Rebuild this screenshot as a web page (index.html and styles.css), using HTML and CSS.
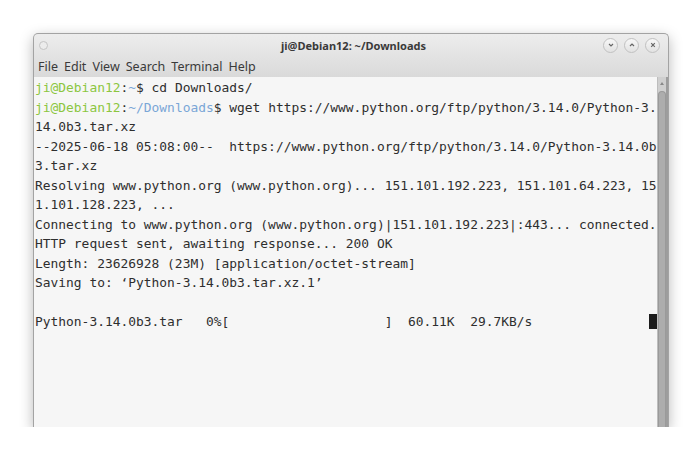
FILE: index.html
```html
<!DOCTYPE html>
<html lang="en">
  <head>
    <meta charset="UTF-8" />
    <title>ji@Debian12: ~/Downloads</title>
    <link rel="stylesheet" href="styles.css">
  </head>
  <body>
    <div class="window">
      <div class="titlebar">
        <span class="dot"></span>
        <span class="title">ji@Debian12: ~/Downloads</span>
        <div class="controls">
          <span class="btn">
            <svg width="8" height="8" viewBox="0 0 8 8"><path d="M2 3 L4 5 L6 3" fill="none" stroke="#666" stroke-width="1.2"/></svg>
          </span>
          <span class="btn">
            <svg width="8" height="8" viewBox="0 0 8 8"><path d="M2 5 L4 3 L6 5" fill="none" stroke="#666" stroke-width="1.2"/></svg>
          </span>
          <span class="btn">
            <svg width="8" height="8" viewBox="0 0 8 8"><path d="M2.2 2.2 L5.8 5.8 M5.8 2.2 L2.2 5.8" fill="none" stroke="#666" stroke-width="1.2"/></svg>
          </span>
        </div>
      </div>
      <div class="menubar">
        <span>File</span><span>Edit</span><span>View</span><span>Search</span><span>Terminal</span><span>Help</span>
      </div>
      <div class="content">
        <pre class="terminal"><span class="user">ji@Debian12</span>:<span class="path">~</span>$ cd Downloads/
<span class="user">ji@Debian12</span>:<span class="path">~/Downloads</span>$ wget https://www.python.org/ftp/python/3.14.0/Python-3.
14.0b3.tar.xz
--2025-06-18 05:08:00--  https://www.python.org/ftp/python/3.14.0/Python-3.14.0b
3.tar.xz
Resolving www.python.org (www.python.org)... 151.101.192.223, 151.101.64.223, 15
1.101.128.223, ...
Connecting to www.python.org (www.python.org)|151.101.192.223|:443... connected.
HTTP request sent, awaiting response... 200 OK
Length: 23626928 (23M) [application/octet-stream]
Saving to: ‘Python-3.14.0b3.tar.xz.1’

Python-3.14.0b3.tar   0%[                    ]  60.11K  29.7KB/s               <span class="cursor"> </span></pre>
        <div class="scrollbar">
          <span class="arrow"></span>
          <span class="slider"></span>
        </div>
      </div>
    </div>
  </body>
</html>
```

FILE: styles.css
```css
* {
  margin: 0;
  padding: 0;
  box-sizing: border-box;
}

body {
  background: #fff;
  font-family: "Noto Sans", "DejaVu Sans", sans-serif;
}

.window {
  width: 636px;
  height: 394px;
  margin: 33px 0 0 33px;
  border: 1px solid #a3a3a3;
  border-bottom: none;
  border-radius: 5px 5px 0 0;
  background: linear-gradient(#ededed, #d9d9d9 44px);
  box-shadow: 0 4px 14px rgba(0, 0, 0, 0.28);
  display: flex;
  flex-direction: column;
  overflow: hidden;
}

.titlebar {
  height: 22px;
  display: flex;
  align-items: center;
  padding: 0 8px 0 5px;
}

.dot {
  width: 9px;
  height: 9px;
  border-radius: 50%;
  border: 1px solid #c4c4c4;
  background: #ececec;
}

.title {
  flex: 1;
  text-align: center;
  font-size: 11px;
  font-weight: bold;
  color: #3a3a3a;
  padding-left: 56px;
}

.controls {
  display: flex;
  gap: 6px;
}

.btn {
  width: 15px;
  height: 15px;
  border-radius: 50%;
  border: 1px solid #c0c0c0;
  background: linear-gradient(#f7f7f7, #e2e2e2);
  display: flex;
  align-items: center;
  justify-content: center;
}

.menubar {
  height: 21px;
  display: flex;
  align-items: center;
  gap: 6px;
  padding-left: 4px;
  font-size: 12.5px;
  color: #3a3a3a;
}

.content {
  flex: 1;
  display: flex;
  min-height: 0;
}

.terminal {
  flex: 1;
  min-width: 0;
  overflow: hidden;
  background: #f6f6f6;
  padding: 1px 0 0 1px;
  font-family: "DejaVu Sans Mono", monospace;
  font-size: 12.92px;
  line-height: 19.5px;
  color: #2e2e2e;
  border-right: 1px solid #bdbdbd;
}

.user {
  color: #8cc63f;
}

.path {
  color: #7aa6d6;
}

.cursor {
  background: #1c1c1c;
}

.scrollbar {
  flex-shrink: 0;
  width: 10px;
  background: #cfcfcf;
  display: flex;
  flex-direction: column;
  align-items: center;
  border-right: 2px solid #9d9d9d;
}

.arrow {
  margin-top: 5px;
  width: 0;
  height: 0;
  border-left: 2px solid transparent;
  border-right: 2px solid transparent;
  border-bottom: 3px solid #888;
}

.slider {
  margin-top: 6px;
  flex: 1;
  width: 8px;
  border-radius: 4px 4px 0 0;
  background: #adadad;
  border: 1px solid #9a9a9a;
  border-bottom: none;
}
```
